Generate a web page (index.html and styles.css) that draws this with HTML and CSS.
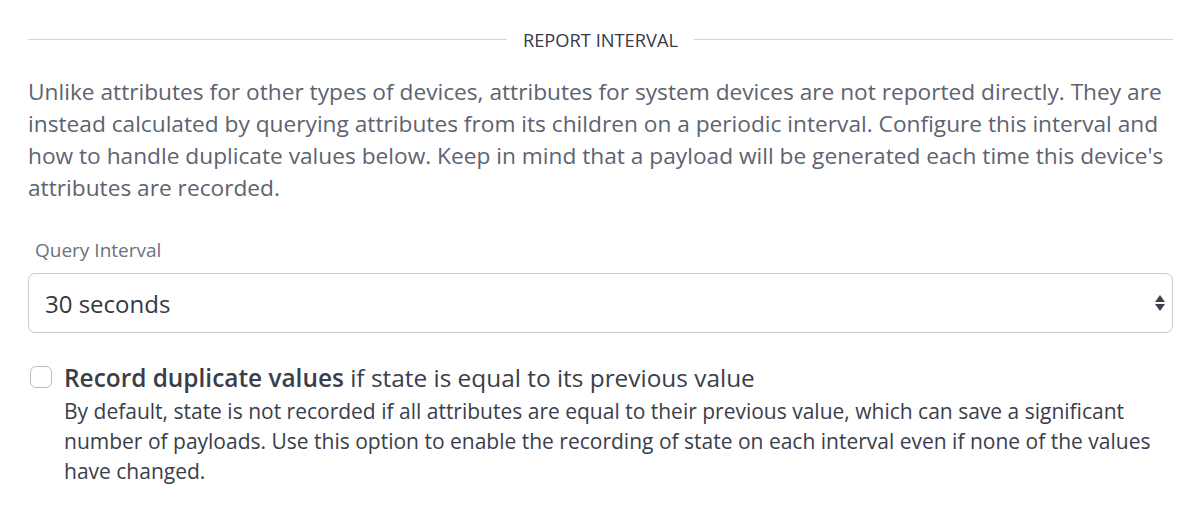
FILE: index.html
```html
<!DOCTYPE html>
<html lang="en">
<head>
    <meta charset="UTF-8">
    <title>Report Interval</title>
    <link rel="stylesheet" href="styles.css">
</head>
<body>
    <div class="section">
        <div class="section-title"><span>REPORT INTERVAL</span></div>
        <p class="intro">Unlike attributes for other types of devices, attributes for system devices are not reported directly. They are instead calculated by querying attributes from its children on a periodic interval. Configure this interval and how to handle duplicate values below. Keep in mind that a payload will be generated each time this device's attributes are recorded.</p>

        <label class="field-label" for="interval">Query Interval</label>
        <div class="select-wrap">
            <select id="interval">
                <option>30 seconds</option>
                <option>1 minute</option>
                <option>5 minutes</option>
            </select>
            <svg class="select-arrows" width="12" height="18" viewBox="0 0 12 18">
                <path d="M6 1 L11 8 L1 8 Z" fill="#3d4250"/>
                <path d="M6 17 L11 10 L1 10 Z" fill="#3d4250"/>
            </svg>
        </div>

        <div class="check-row">
            <input type="checkbox" id="dupes">
            <div class="check-text">
                <label for="dupes" class="check-label"><strong>Record duplicate values</strong> if state is equal to its previous value</label>
                <p class="check-help">By default, state is not recorded if all attributes are equal to their previous value, which can save a significant number of payloads. Use this option to enable the recording of state on each interval even if none of the values have changed.</p>
            </div>
        </div>
    </div>
</body>
</html>
```

FILE: styles.css
```css
body {
    margin: 0;
    background-color: #ffffff;
    font-family: 'Open Sans', 'Noto Sans', sans-serif;
    color: #3d4250;
}

.section {
    padding: 27px 27px 0 28px;
}

.section-title {
    display: flex;
    align-items: center;
    gap: 16px;
    font-size: 18.3px;
    color: #363b47;
}

.section-title::before,
.section-title::after {
    content: "";
    flex: 1;
    border-top: 1px solid #d3d5d9;
}

.intro {
    margin: 24px 0 0 0;
    font-size: 22.7px;
    line-height: 32px;
    color: #5d6370;
}

.field-label {
    display: block;
    margin: 33px 0 0 7px;
    font-size: 19px;
    color: #6c717c;
}

.select-wrap {
    position: relative;
    margin-top: 10px;
}

.select-wrap select {
    width: 100%;
    height: 60px;
    padding: 0 16px;
    border: 1px solid #c9cbcf;
    border-radius: 7px;
    background: #ffffff;
    font-family: inherit;
    font-size: 24px;
    color: #343844;
    appearance: none;
    -webkit-appearance: none;
}

.select-arrows {
    position: absolute;
    right: 7px;
    top: 21px;
}

.check-row {
    display: flex;
    gap: 12px;
    margin-top: 30px;
}

.check-row input {
    appearance: none;
    -webkit-appearance: none;
    flex: none;
    width: 22px;
    height: 22px;
    margin: 3px 0 0 2px;
    border: 1px solid #b9bcc2;
    border-radius: 6px;
    background: #ffffff;
}

.check-label {
    display: block;
    font-size: 24.4px;
    line-height: 30px;
    color: #3a3e4a;
}

.check-label strong {
    font-weight: 600;
}

.check-help {
    margin: 3px 0 0 0;
    font-size: 21px;
    line-height: 30px;
    color: #3a3e4a;
}
```
